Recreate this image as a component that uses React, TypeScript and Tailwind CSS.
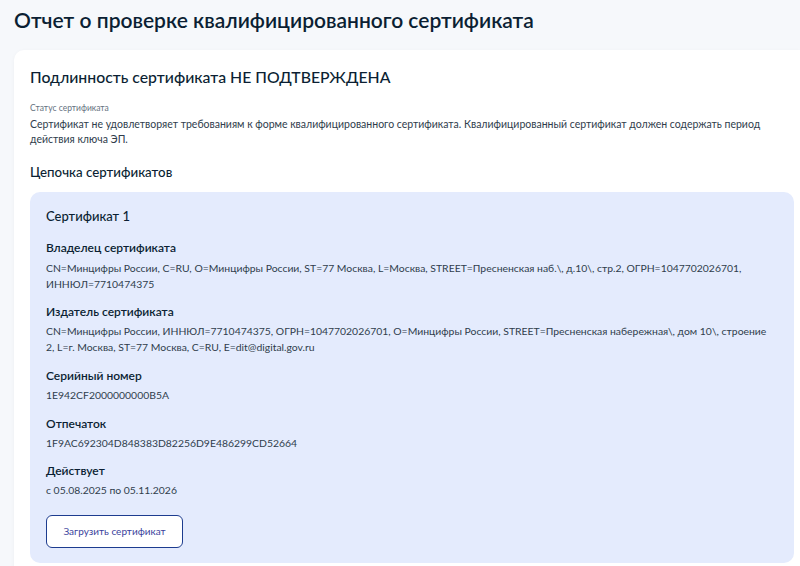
import React from "react";

const FONT = { fontFamily: "Lato, 'Noto Sans', sans-serif" };

type Field = { label: string; value: string[]; gap: string; vgap: string };

const FIELDS: Field[] = [
  {
    label: "Владелец сертификата",
    value: [
      "CN=Минцифры России, C=RU, O=Минцифры России, ST=77 Москва, L=Москва, STREET=Пресненская наб.\\, д.10\\, стр.2, ОГРН=1047702026701,",
      "ИННЮЛ=7710474375",
    ],
    gap: "mt-[13px]",
    vgap: "mt-[4px]",
  },
  {
    label: "Издатель сертификата",
    value: [
      "CN=Минцифры России, ИННЮЛ=7710474375, ОГРН=1047702026701, O=Минцифры России, STREET=Пресненская набережная\\, дом 10\\, строение",
      "2, L=г. Москва, ST=77 Москва, C=RU, E=dit@digital.gov.ru",
    ],
    gap: "mt-[11px]",
    vgap: "mt-[3px]",
  },
  {
    label: "Серийный номер",
    value: ["1E942CF2000000000B5A"],
    gap: "mt-[12px]",
    vgap: "mt-[3px]",
  },
  {
    label: "Отпечаток",
    value: ["1F9AC692304D848383D82256D9E486299CD52664"],
    gap: "mt-[11px]",
    vgap: "mt-[3px]",
  },
  {
    label: "Действует",
    value: ["с 05.08.2025 по 05.11.2026"],
    gap: "mt-[11px]",
    vgap: "mt-[3px]",
  },
];

function CertField({ f }: { f: Field }) {
  return (
    <div className={f.gap}>
      <div className="text-[12px] leading-[18px] font-semibold text-[#0b1f33]">{f.label}</div>
      <div className={`${f.vgap} text-[10.4px] leading-[15.5px] text-[#2f3d4c] whitespace-nowrap`}>
        {f.value.map((line, i) => (
          <div key={i}>{line}</div>
        ))}
      </div>
    </div>
  );
}

export default function App() {
  return (
    <div className="w-[800px] h-[566px] overflow-hidden bg-[#f6f8fb] pl-[14px] pt-[6px]" style={FONT}>
      <h1 className="text-[21px] leading-[28px] font-semibold text-[#0b1f33]">
        Отчет о проверке квалифицированного сертификата
      </h1>

      <div className="mt-[16px] bg-white rounded-tl-[10px] pl-4 pr-[6px] pt-[15px] pb-6 shadow-[0_1px_4px_rgba(0,0,0,0.04)]">
        <h2 className="text-[15.8px] leading-[24px] font-medium text-[#0b1f33]">
          Подлинность сертификата НЕ ПОДТВЕРЖДЕНА
        </h2>

        <div className="mt-[12px] text-[8.5px] leading-[14px] text-[#66727f]">Статус сертификата</div>
        <p className="mt-[2px] text-[10.5px] leading-[15px] text-[#2f3d4c] pr-8">
          Сертификат не удовлетворяет требованиям к форме квалифицированного сертификата. Квалифицированный сертификат должен содержать период
          действия ключа ЭП.
        </p>

        <h3 className="mt-[15px] text-[13.3px] leading-[20px] font-medium text-[#0b1f33]">Цепочка сертификатов</h3>

        <div className="mt-[10px] bg-[#e4ebfd] rounded-[10px] pl-4 pr-4 pt-[14px] pb-[15px]">
          <div className="text-[13px] leading-[20px] font-medium text-[#0b1f33]">Сертификат 1</div>

          {FIELDS.map((f) => (
            <CertField key={f.label} f={f} />
          ))}

          <button className="mt-[16px] h-[33px] w-[137px] rounded-[6px] border border-[#1d3c8f] bg-white text-[10px] text-[#3a3f9c] flex items-center justify-center">
            Загрузить сертификат
          </button>
        </div>
      </div>
    </div>
  );
}
